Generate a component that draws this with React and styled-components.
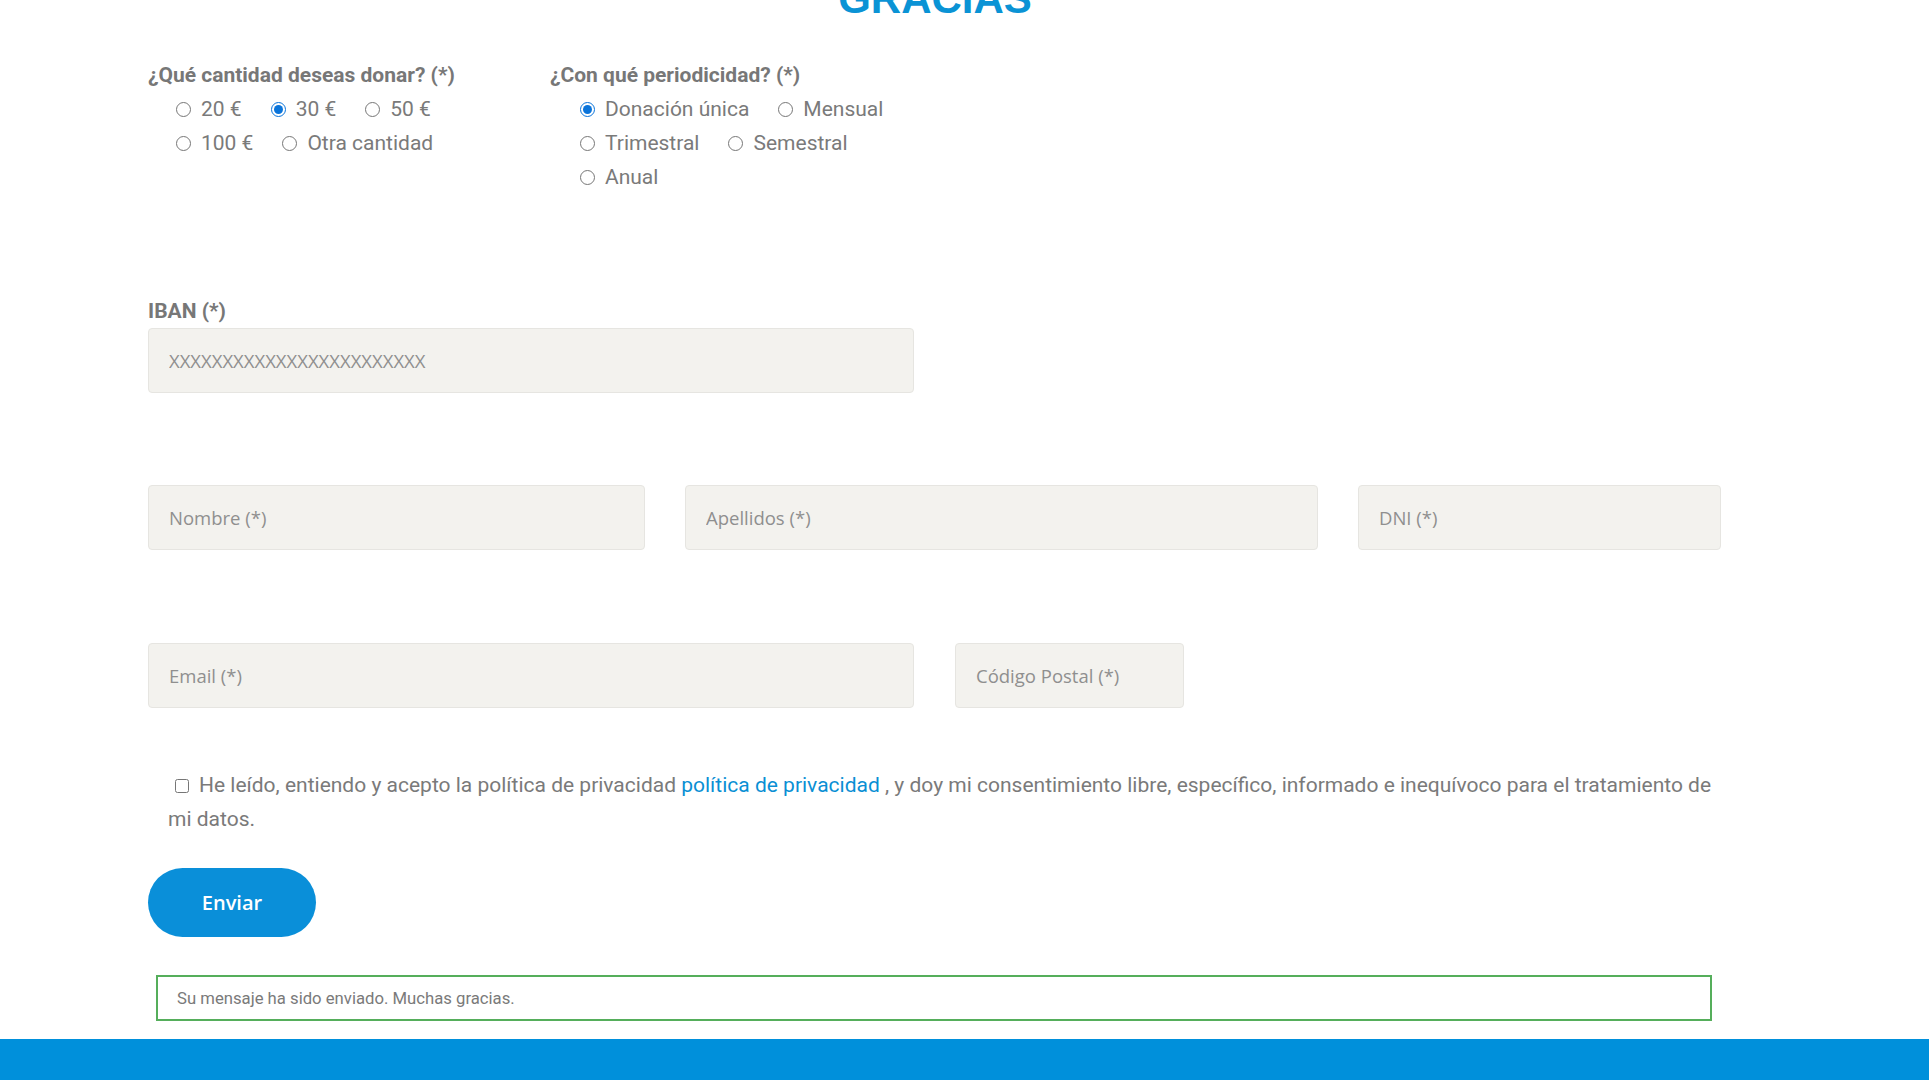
import React from 'react';
import styled, { createGlobalStyle } from 'styled-components';

const GlobalStyle = createGlobalStyle`
  html, body {
    margin: 0;
    padding: 0;
    background: #ffffff;
    overflow: hidden;
  }
  body {
    font-family: Roboto, "Liberation Sans", sans-serif;
    color: #7a7a7a;
  }
`;

const Page = styled.div`
  width: 1929px;
  height: 1080px;
  display: flex;
  flex-direction: column;
`;

const Container = styled.div`
  width: 1574px;
  margin-left: 148px;
  display: flex;
  flex-direction: column;
`;

const Title = styled.h1`
  margin: -22px 0 0;
  font-family: "Liberation Sans", Arial, sans-serif;
  font-size: 42px;
  line-height: 42px;
  font-weight: 700;
  color: #0a93d5;
  text-align: center;
`;

const Questions = styled.div`
  display: grid;
  grid-template-columns: 372px 372px;
  column-gap: 30px;
  margin-top: 38px;
  align-items: start;
`;

const Question = styled.div`
  display: flex;
  flex-direction: column;
`;

const FieldLabel = styled.div`
  font-size: 21px;
  line-height: 34px;
  font-weight: 700;
  color: #777777;
  ${(p) => p.$gap && `margin-top: ${p.$gap}px;`}
`;

const RadioList = styled.div`
  display: flex;
  flex-wrap: wrap;
  padding-left: ${(p) => p.$indent}px;
`;

const RadioItem = styled.label`
  display: flex;
  align-items: center;
  height: 34px;
  margin-right: 29px;
  font-size: 21px;
  color: #7a7a7a;
`;

const Radio = styled.input.attrs({ type: 'radio' })`
  width: 15px;
  height: 15px;
  margin: 0 10px 0 0;
  accent-color: #0a74da;
`;

const Input = styled.input`
  box-sizing: border-box;
  width: ${(p) => p.$w}px;
  height: 65px;
  padding: 0 20px;
  background: #f3f2ee;
  border: 1px solid #e6e5e1;
  border-radius: 4px;
  font-family: "Open Sans", sans-serif;
  font-size: 18.5px;
  color: #777;
  outline: none;

  &::placeholder {
    color: #8f8f8f;
  }
`;

const InputRow = styled.div`
  display: flex;
  gap: ${(p) => p.$gap || 40}px;
  margin-top: ${(p) => p.$top}px;
`;

const Consent = styled.p`
  margin: 59.5px 0 0;
  padding-left: 20px;
  font-size: 21px;
  line-height: 34.4px;
  color: #7a7a7a;
`;

const Checkbox = styled.input.attrs({ type: 'checkbox' })`
  width: 14px;
  height: 14px;
  margin: 0 10px 0 7px;
  vertical-align: -1px;
`;

const Link = styled.a`
  color: #0a8fd4;
  text-decoration: none;
`;

const SubmitButton = styled.button`
  margin-top: 32px;
  width: 168px;
  height: 69px;
  border: none;
  border-radius: 35px;
  background: #0a8fd9;
  color: #ffffff;
  font-family: "Open Sans", sans-serif;
  font-size: 20px;
  font-weight: 600;
  cursor: pointer;
`;

const Notice = styled.div`
  box-sizing: border-box;
  margin: 38px 10px 0 8px;
  height: 46px;
  display: flex;
  align-items: center;
  padding: 0 19px;
  border: 2px solid #55ae5b;
  font-size: 16.7px;
  color: #7a7a7a;
`;

const Footer = styled.footer`
  margin-top: auto;
  height: 41px;
  background: #0090db;
`;

const amounts = [
  { label: '20 €' },
  { label: '30 €', checked: true },
  { label: '50 €' },
  { label: '100 €' },
  { label: 'Otra cantidad' },
];

const periods = [
  { label: 'Donación única', checked: true },
  { label: 'Mensual' },
  { label: 'Trimestral' },
  { label: 'Semestral' },
  { label: 'Anual' },
];

const RadioGroup = ({ name, options, indent }) => (
  <RadioList $indent={indent}>
    {options.map((o) => (
      <RadioItem key={o.label}>
        <Radio name={name} defaultChecked={!!o.checked} />
        {o.label}
      </RadioItem>
    ))}
  </RadioList>
);

export default function App() {
  return (
    <Page>
      <GlobalStyle />
      <Container>
        <Title>GRACIAS</Title>

        <Questions>
          <Question>
            <FieldLabel>¿Qué cantidad deseas donar? (*)</FieldLabel>
            <RadioGroup name="cantidad" options={amounts} indent={28} />
          </Question>
          <Question>
            <FieldLabel>¿Con qué periodicidad? (*)</FieldLabel>
            <RadioGroup name="periodo" options={periods} indent={30} />
          </Question>
        </Questions>

        <FieldLabel $gap={100}>IBAN (*)</FieldLabel>
        <Input $w={766} placeholder="XXXXXXXXXXXXXXXXXXXXXXXX" />

        <InputRow $top={92}>
          <Input $w={497} placeholder="Nombre (*)" />
          <Input $w={633} placeholder="Apellidos (*)" />
          <Input $w={363} placeholder="DNI (*)" />
        </InputRow>

        <InputRow $top={93} $gap={41}>
          <Input $w={766} placeholder="Email (*)" />
          <Input $w={229} placeholder="Código Postal (*)" />
        </InputRow>

        <Consent>
          <Checkbox />
          He leído, entiendo y acepto la política de privacidad{' '}
          <Link href="#">política de privacidad</Link> , y doy mi consentimiento libre,
          específico, informado e inequívoco para el tratamiento de mi datos.
        </Consent>

        <SubmitButton>Enviar</SubmitButton>

        <Notice>Su mensaje ha sido enviado. Muchas gracias.</Notice>
      </Container>
      <Footer />
    </Page>
  );
}
